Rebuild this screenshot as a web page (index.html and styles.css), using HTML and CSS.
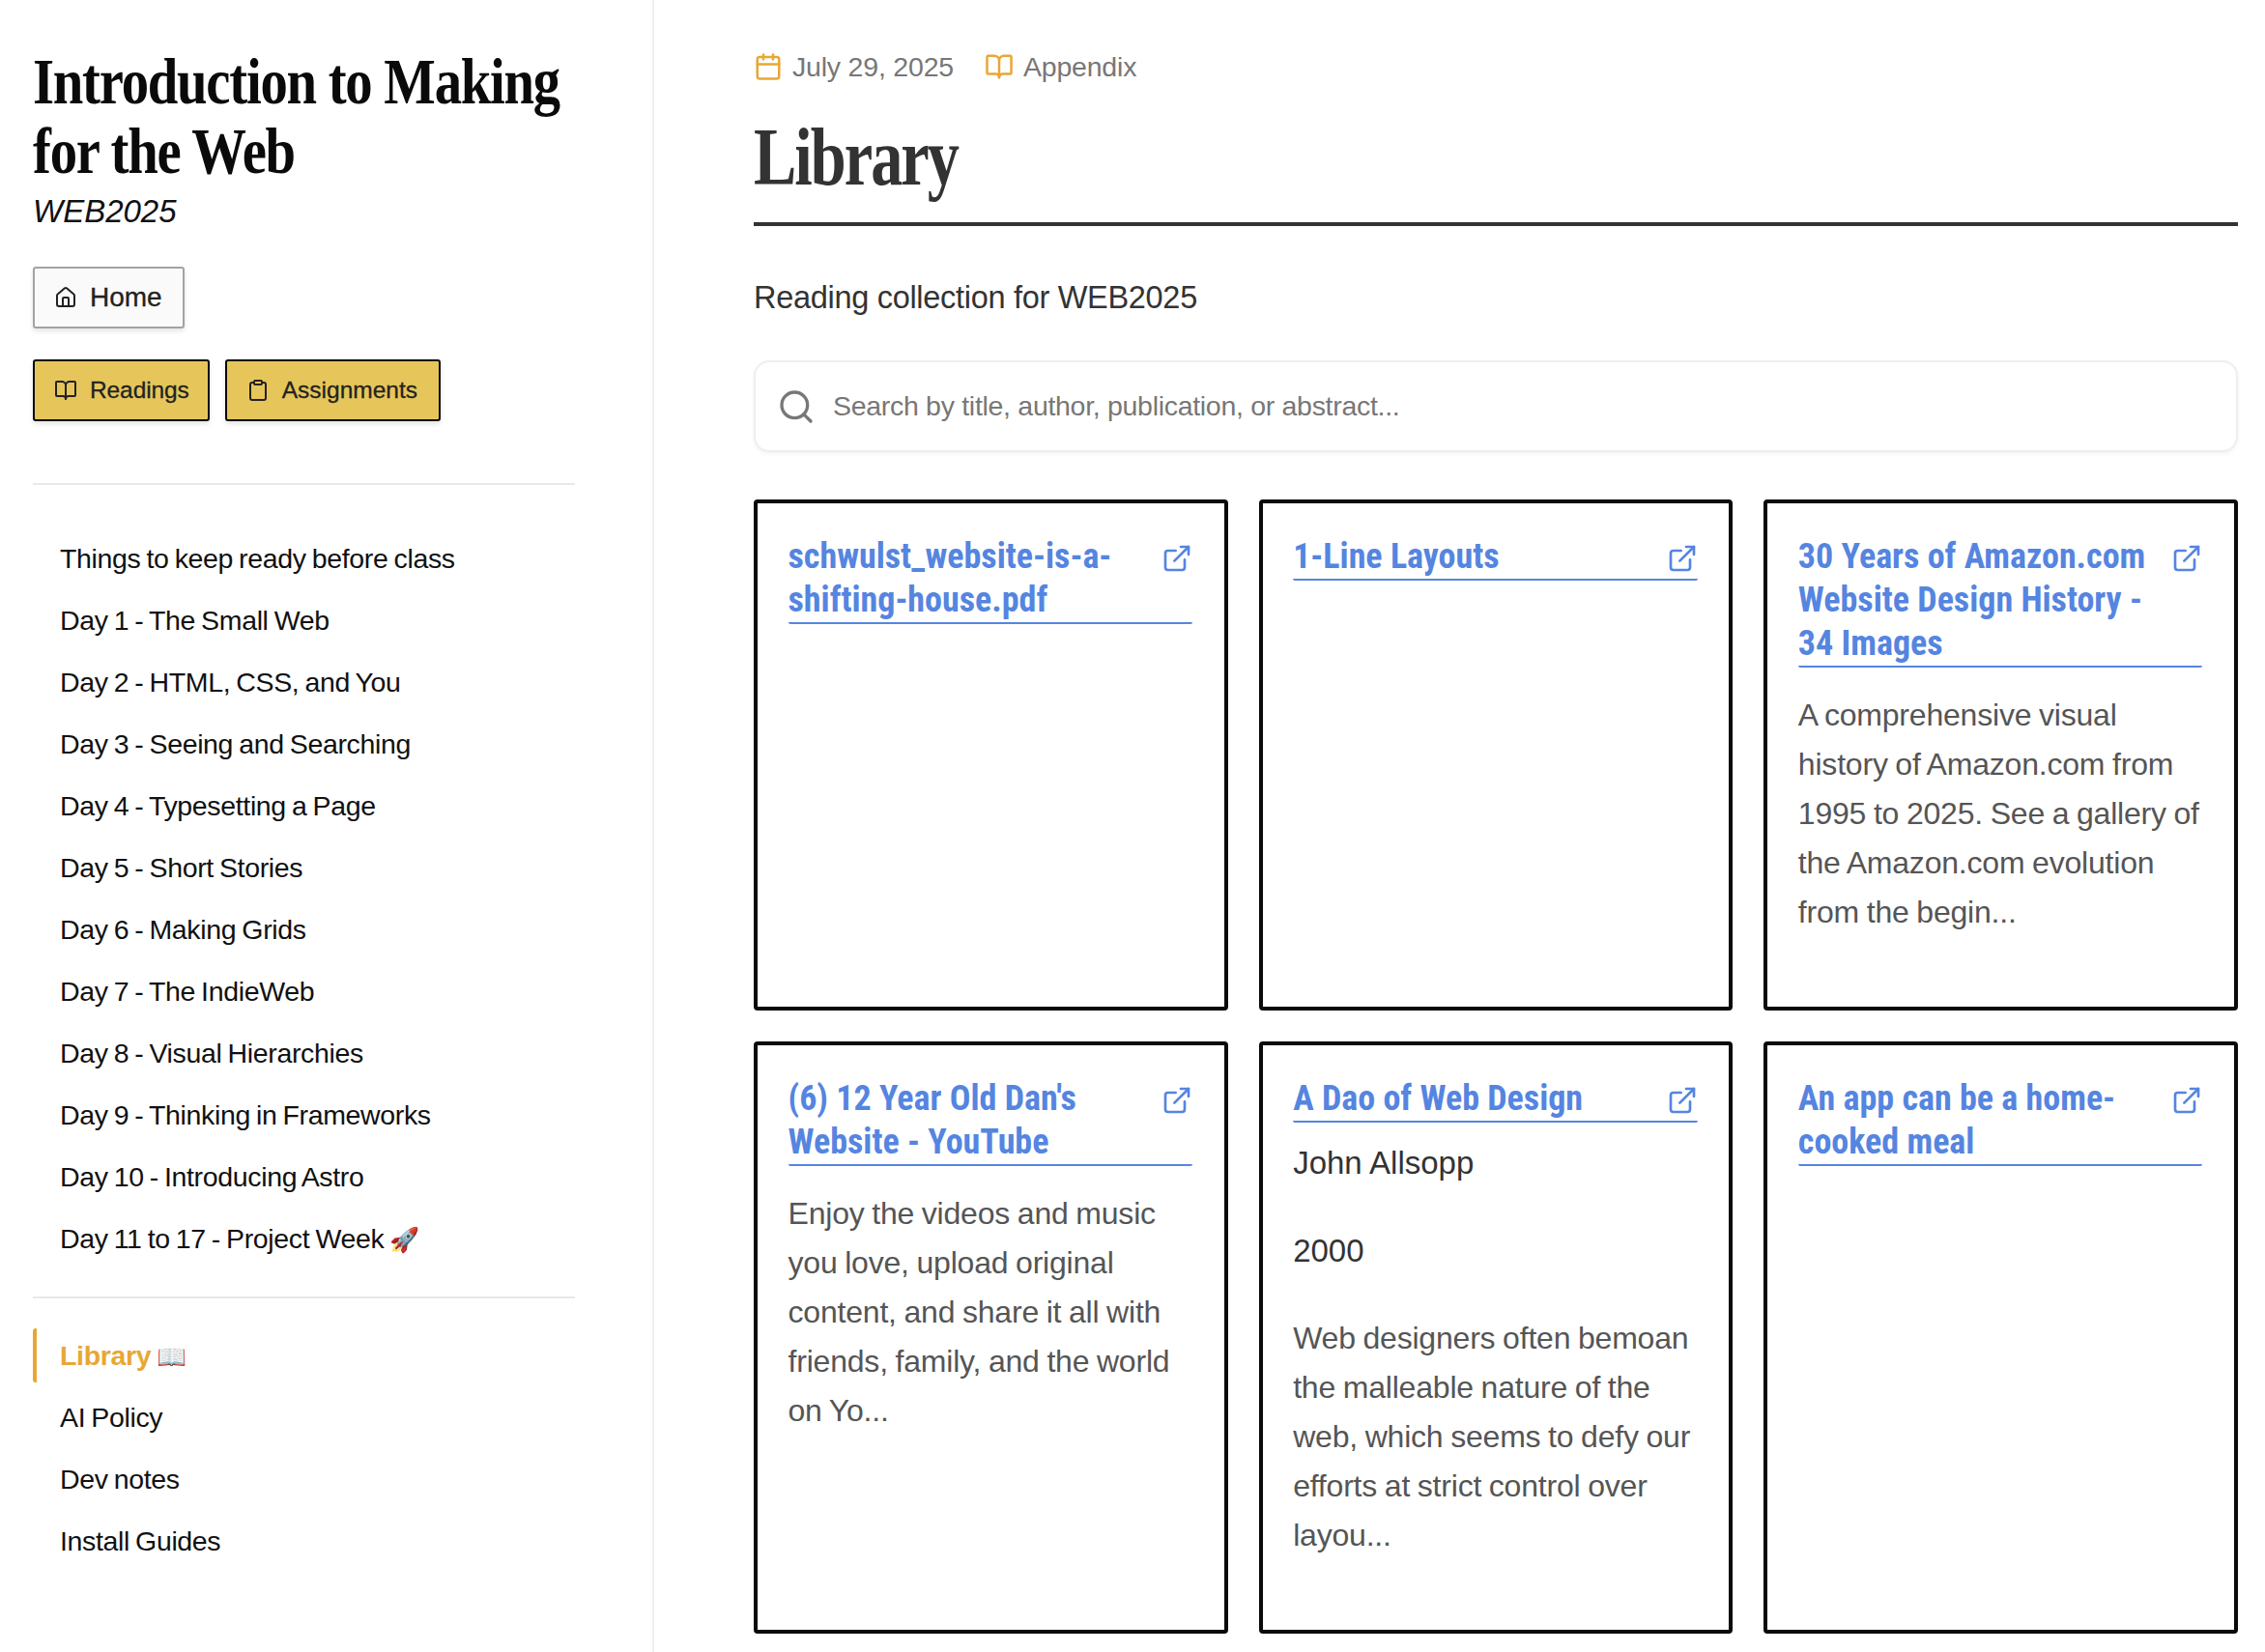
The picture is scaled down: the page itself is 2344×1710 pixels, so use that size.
FILE: index.html

```html
<!DOCTYPE html>
<html lang="en">
<head>
    <meta charset="UTF-8">
    <title>Library - Introduction to Making for the Web</title>
    <link rel="stylesheet" href="styles.css">
</head>
<body>

<svg class="sprite" aria-hidden="true">
    <symbol id="i-book" viewBox="0 0 24 24"><path d="M12 7v14"/><path d="M3 18a1 1 0 0 1-1-1V4a1 1 0 0 1 1-1h5a4 4 0 0 1 4 4 4 4 0 0 1 4-4h5a1 1 0 0 1 1 1v13a1 1 0 0 1-1 1h-6a3 3 0 0 0-3 3 3 3 0 0 0-3-3z"/></symbol>
    <symbol id="i-home" viewBox="0 0 24 24"><path d="M15 21v-8a1 1 0 0 0-1-1h-4a1 1 0 0 0-1 1v8"/><path d="M3 10a2 2 0 0 1 .709-1.528l7-5.999a2 2 0 0 1 2.582 0l7 5.999A2 2 0 0 1 21 10v9a2 2 0 0 1-2 2H5a2 2 0 0 1-2-2z"/></symbol>
    <symbol id="i-clip" viewBox="0 0 24 24"><rect x="8" y="2" width="8" height="4" rx="1"/><path d="M16 4h2a2 2 0 0 1 2 2v14a2 2 0 0 1-2 2H6a2 2 0 0 1-2-2V6a2 2 0 0 1 2-2h2"/></symbol>
    <symbol id="i-cal" viewBox="0 0 24 24"><path d="M8 2v4"/><path d="M16 2v4"/><rect x="3" y="4" width="18" height="18" rx="2"/><path d="M3 10h18"/></symbol>
    <symbol id="i-search" viewBox="0 0 24 24"><circle cx="11" cy="11" r="8"/><path d="m21 21-4.3-4.3"/></symbol>
    <symbol id="i-ext" viewBox="0 0 24 24"><path d="M15 3h6v6"/><path d="M10 14 21 3"/><path d="M18 13v6a2 2 0 0 1-2 2H5a2 2 0 0 1-2-2V8a2 2 0 0 1 2-2h6"/></symbol>
</svg>

<div class="page">

    <aside class="sidebar">
        <h2 class="site-title"><span>Introduction to Making for the Web</span></h2>
        <p class="site-code">WEB2025</p>

        <div class="btn-row">
            <a class="btn btn-light" href="#"><svg class="icon"><use href="#i-home"/></svg>Home</a>
        </div>
        <div class="btn-row">
            <a class="btn btn-gold" href="#"><svg class="icon"><use href="#i-book"/></svg>Readings</a>
            <a class="btn btn-gold" href="#"><svg class="icon"><use href="#i-clip"/></svg>Assignments</a>
        </div>

        <ul class="nav nav-days">
            <li><a href="#">Things to keep ready before class</a></li>
            <li><a href="#">Day 1 - The Small Web</a></li>
            <li><a href="#">Day 2 - HTML, CSS, and You</a></li>
            <li><a href="#">Day 3 - Seeing and Searching</a></li>
            <li><a href="#">Day 4 - Typesetting a Page</a></li>
            <li><a href="#">Day 5 - Short Stories</a></li>
            <li><a href="#">Day 6 - Making Grids</a></li>
            <li><a href="#">Day 7 - The IndieWeb</a></li>
            <li><a href="#">Day 8 - Visual Hierarchies</a></li>
            <li><a href="#">Day 9 - Thinking in Frameworks</a></li>
            <li><a href="#">Day 10 - Introducing Astro</a></li>
            <li><a href="#">Day 11 to 17 - Project Week <span class="emoji">🚀</span></a></li>
        </ul>

        <ul class="nav nav-extra">
            <li class="active"><a href="#"><b>Library</b> <span class="emoji">📖</span></a></li>
            <li><a href="#">AI Policy</a></li>
            <li><a href="#">Dev notes</a></li>
            <li><a href="#">Install Guides</a></li>
        </ul>
    </aside>

    <main class="content">
        <div class="meta">
            <span class="meta-item"><svg class="icon"><use href="#i-cal"/></svg>July 29, 2025</span>
            <span class="meta-item"><svg class="icon"><use href="#i-book"/></svg>Appendix</span>
        </div>

        <h1 class="page-title"><span>Library</span></h1>

        <p class="lead">Reading collection for WEB2025</p>

        <div class="search">
            <svg class="icon"><use href="#i-search"/></svg>
            <input type="text" placeholder="Search by title, author, publication, or abstract...">
        </div>

        <div class="cards">
            <div class="card">
                <a class="card-title" href="#"><span>schwulst_website-is-a-shifting-house.pdf</span><svg class="icon"><use href="#i-ext"/></svg></a>
            </div>
            <div class="card">
                <a class="card-title" href="#"><span>1-Line Layouts</span><svg class="icon"><use href="#i-ext"/></svg></a>
            </div>
            <div class="card">
                <a class="card-title" href="#"><span>30 Years of Amazon.com Website Design History - 34 Images</span><svg class="icon"><use href="#i-ext"/></svg></a>
                <p class="abstract">A comprehensive visual history of Amazon.com from 1995 to 2025. See a gallery of the Amazon.com evolution from the begin...</p>
            </div>
            <div class="card">
                <a class="card-title" href="#"><span>(6) 12 Year Old Dan's Website - YouTube</span><svg class="icon"><use href="#i-ext"/></svg></a>
                <p class="abstract">Enjoy the videos and music you love, upload original content, and share it all with friends, family, and the world on Yo...</p>
            </div>
            <div class="card">
                <a class="card-title" href="#"><span>A Dao of Web Design</span><svg class="icon"><use href="#i-ext"/></svg></a>
                <p class="byline">John Allsopp</p>
                <p class="byline">2000</p>
                <p class="abstract">Web designers often bemoan the malleable nature of the web, which seems to defy our efforts at strict control over layou...</p>
            </div>
            <div class="card">
                <a class="card-title" href="#"><span>An app can be a home-cooked meal</span><svg class="icon"><use href="#i-ext"/></svg></a>
            </div>
        </div>
    </main>

</div>

</body>
</html>
```

FILE: styles.css

```css
* {
    box-sizing: border-box;
}

html,
body {
    margin: 0;
    height: 1710px;
    overflow: hidden;
}

body {
    font-family: "Liberation Sans", Arial, sans-serif;
    color: #111;
    background: #fff;
}

a {
    color: inherit;
    text-decoration: none;
}

.sprite {
    display: none;
}

.icon {
    flex: none;
    fill: none;
    stroke: currentColor;
    stroke-width: 2;
    stroke-linecap: round;
    stroke-linejoin: round;
}

.page {
    display: flex;
    height: 1710px;
}

/* sidebar */

.sidebar {
    width: 677px;
    flex: none;
    padding: 48px 80px 0 34px;
    border-right: 2px solid #eee;
}

/* the headline face is a narrow display serif, so the serif we have gets squeezed */
.site-title {
    margin: 0;
    font-family: "Liberation Serif", serif;
    font-weight: bold;
    font-size: 68px;
    line-height: 72px;
    letter-spacing: -1.5px;
    color: #0a0a0a;
}

.site-title span {
    display: block;
    width: 662px;
    transform: scaleX(0.834);
    transform-origin: left;
}

.site-code {
    margin: 5px 0 0;
    font-size: 33px;
    line-height: 44px;
    font-style: italic;
}

.btn-row {
    display: flex;
    gap: 16px;
}

.btn-row + .btn-row {
    margin-top: 32px;
}

.site-code + .btn-row {
    margin-top: 35px;
}

.btn {
    display: flex;
    align-items: center;
    gap: 13px;
    height: 64px;
    padding: 0 19px 0 20px;
    border-radius: 3px;
    font-size: 28px;
    -webkit-text-stroke: 0.3px;
    box-shadow: 0 3px 5px rgba(0, 0, 0, 0.1);
}

.btn .icon {
    width: 24px;
    height: 24px;
}

.btn-light {
    border: 2px solid #a3a3a3;
    background: #fafafa;
    color: #222;
    padding-right: 21px;
}

.btn-gold {
    border: 2px solid #0a0a0a;
    background: #e6c65a;
    color: #222;
    font-size: 24.5px;
    letter-spacing: -0.1px;
}

.btn-gold + .btn-gold {
    padding-right: 22px;
    letter-spacing: 0;
}

.nav {
    list-style: none;
    margin: 0;
    padding: 0;
    font-size: 28.5px;
    letter-spacing: -0.35px;
    word-spacing: -1.5px;
    border-top: 2px solid #e8e8e8;
}

.nav li {
    height: 64px;
    padding-left: 28px;
    line-height: 64px;
    white-space: nowrap;
}

.emoji {
    font-size: 25px;
}

.nav-days {
    margin-top: 64px;
    padding-top: 44px;
    padding-bottom: 28px;
}

.nav-extra {
    padding-top: 31px;
}

.nav li.active {
    color: #e8a735;
    height: 56px;
    line-height: 56px;
    margin-bottom: 4px;
    border-left: 4px solid #e8a735;
    border-radius: 3px;
    padding-left: 24px;
}

/* main column */

.content {
    flex: 1;
    min-width: 0;
    padding: 47px 28px 0 103px;
}

.meta {
    display: flex;
    gap: 32px;
    font-size: 28.5px;
    letter-spacing: -0.2px;
    line-height: 44px;
    color: #777;
}

.meta-item {
    display: flex;
    align-items: center;
    gap: 10px;
}

.meta .icon {
    width: 30px;
    height: 30px;
    color: #e8a735;
}

.page-title {
    margin: 21px 0 0;
    padding-bottom: 16px;
    border-bottom: 4px solid #333;
    font-family: "Liberation Serif", serif;
    font-size: 84px;
    line-height: 102px;
    letter-spacing: -2.5px;
    color: #333;
}

.page-title span {
    display: inline-block;
    transform: scaleX(0.79);
    transform-origin: left;
}

.lead {
    margin: 52px 0 0;
    font-size: 32.5px;
    line-height: 44px;
    letter-spacing: -0.3px;
    color: #333;
}

.search {
    display: flex;
    align-items: center;
    gap: 18px;
    height: 95px;
    margin-top: 43px;
    padding: 0 22px;
    border: 2px solid #eee;
    border-radius: 16px;
    box-shadow: 0 2px 4px rgba(0, 0, 0, 0.05);
}

.search .icon {
    width: 40px;
    height: 40px;
    color: #777;
}

.search input {
    flex: 1;
    border: 0;
    outline: 0;
    padding: 0;
    font: 28.5px "Liberation Sans", Arial, sans-serif;
    letter-spacing: -0.3px;
}

.search input::placeholder {
    color: #777;
    opacity: 1;
}

.cards {
    display: grid;
    grid-template-columns: repeat(3, 1fr);
    grid-template-rows: 529px 613px;
    gap: 32px;
    margin-top: 49px;
}

.card {
    border: 4px solid #0a0a0a;
    border-radius: 4px;
    padding: 33px 32.5px 32px 31.5px;
}

.card-title {
    display: flex;
    justify-content: space-between;
    gap: 16px;
    border-bottom: 2px solid #5585e0;
    border-radius: 0 0 2px 2px;
    font-family: Roboto, "Liberation Sans", sans-serif;
    font-stretch: condensed;
    font-weight: bold;
    font-size: 36px;
    line-height: 45px;
    color: #5585e0;
}

.card-title .icon {
    width: 32px;
    height: 32px;
    margin-top: 8px;
}

.abstract,
.byline {
    margin: 24px 0 0;
    line-height: 51px;
}

.abstract {
    font-size: 32px;
    letter-spacing: -0.2px;
    word-spacing: -1px;
    color: #555;
}

.byline {
    margin-top: 16px;
    font-size: 33px;
    color: #333;
}

.byline + .byline,
.byline + .abstract {
    margin-top: 40px;
}
```
